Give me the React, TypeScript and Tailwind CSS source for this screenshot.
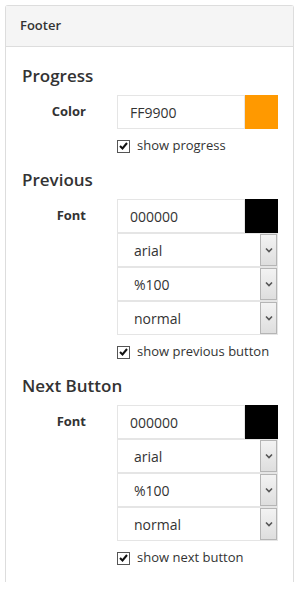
import { useState } from "react";

type SectionProps = {
  title: string;
  label: string;
  color: string;
  swatch: string;
  selects?: string[];
  checkLabel: string;
};

function ColorInput({ value, swatch }: { value: string; swatch: string }) {
  return (
    <div className="flex h-[34px] w-full">
      <div className="flex flex-1 items-center border border-[#e5e5e5] bg-white pl-[12px] text-[14px] text-[#333]">
        {value}
      </div>
      <div className="h-full w-[33px]" style={{ backgroundColor: swatch }} />
    </div>
  );
}

function FakeSelect({ value }: { value: string }) {
  return (
    <div className="flex h-[34px] w-full items-center border border-[#e5e5e5] bg-white">
      <span className="flex-1 pl-[16px] text-[14px] text-[#333]">{value}</span>
      <div className="flex h-[32px] w-[17px] items-center justify-center border border-[#b5b5b5] bg-gradient-to-b from-[#f3f3f3] to-[#dedede]">
        <svg width="8" height="6" viewBox="0 0 8 6" fill="none">
          <path d="M1 1.5L4 4.5L7 1.5" stroke="#555" strokeWidth="1.6" />
        </svg>
      </div>
    </div>
  );
}

function CheckRow({ label }: { label: string }) {
  const [checked, setChecked] = useState(true);
  return (
    <label className="mt-[7px] flex h-5 cursor-pointer items-center gap-[7px]">
      <button
        type="button"
        onClick={() => setChecked(!checked)}
        className="flex size-[13px] items-center justify-center border border-[#555] bg-white"
      >
        {checked && (
          <svg width="9" height="8" viewBox="0 0 9 8" fill="none">
            <path d="M1 4L3.5 6.5L8 1" stroke="#111" strokeWidth="2" />
          </svg>
        )}
      </button>
      <span className="text-[13px] text-[#333]">{label}</span>
    </label>
  );
}

function Section({ title, label, color, swatch, selects, checkLabel }: SectionProps) {
  return (
    <div className="flex flex-col">
      <h3 className="mb-[7px] h-6 text-[17px] leading-6 font-semibold text-[#333]">{title}</h3>
      <div className="flex">
        <div className="flex h-[34px] w-[64px] items-center justify-end text-[13px] font-bold text-[#333]">
          {label}
        </div>
        <div className="ml-[31px] flex w-[161px] flex-col">
          <ColorInput value={color} swatch={swatch} />
          {selects?.map((s) => (
            <FakeSelect key={s} value={s} />
          ))}
          <CheckRow label={checkLabel} />
        </div>
      </div>
    </div>
  );
}

export default function App() {
  return (
    <div className="h-[590px] w-[298px] bg-white pt-[5px] pl-[5px] font-['Open_Sans',sans-serif]">
      {/* 패널 */}
      <div className="flex h-[577px] w-[289px] flex-col rounded-t-[3px] border border-b-0 border-[#ddd]">
        <div className="flex h-[41px] items-center border-b border-[#ddd] bg-[#f5f5f5] pl-[14px] text-[13px] font-semibold text-[#333]">
          Footer
        </div>
        <div className="flex flex-col gap-3 pt-[17px] pl-4">
          <Section
            title="Progress"
            label="Color"
            color="FF9900"
            swatch="#ff9900"
            checkLabel="show progress"
          />
          <Section
            title="Previous"
            label="Font"
            color="000000"
            swatch="#000000"
            selects={["arial", "%100", "normal"]}
            checkLabel="show previous button"
          />
          <Section
            title="Next Button"
            label="Font"
            color="000000"
            swatch="#000000"
            selects={["arial", "%100", "normal"]}
            checkLabel="show next button"
          />
        </div>
      </div>
    </div>
  );
}
